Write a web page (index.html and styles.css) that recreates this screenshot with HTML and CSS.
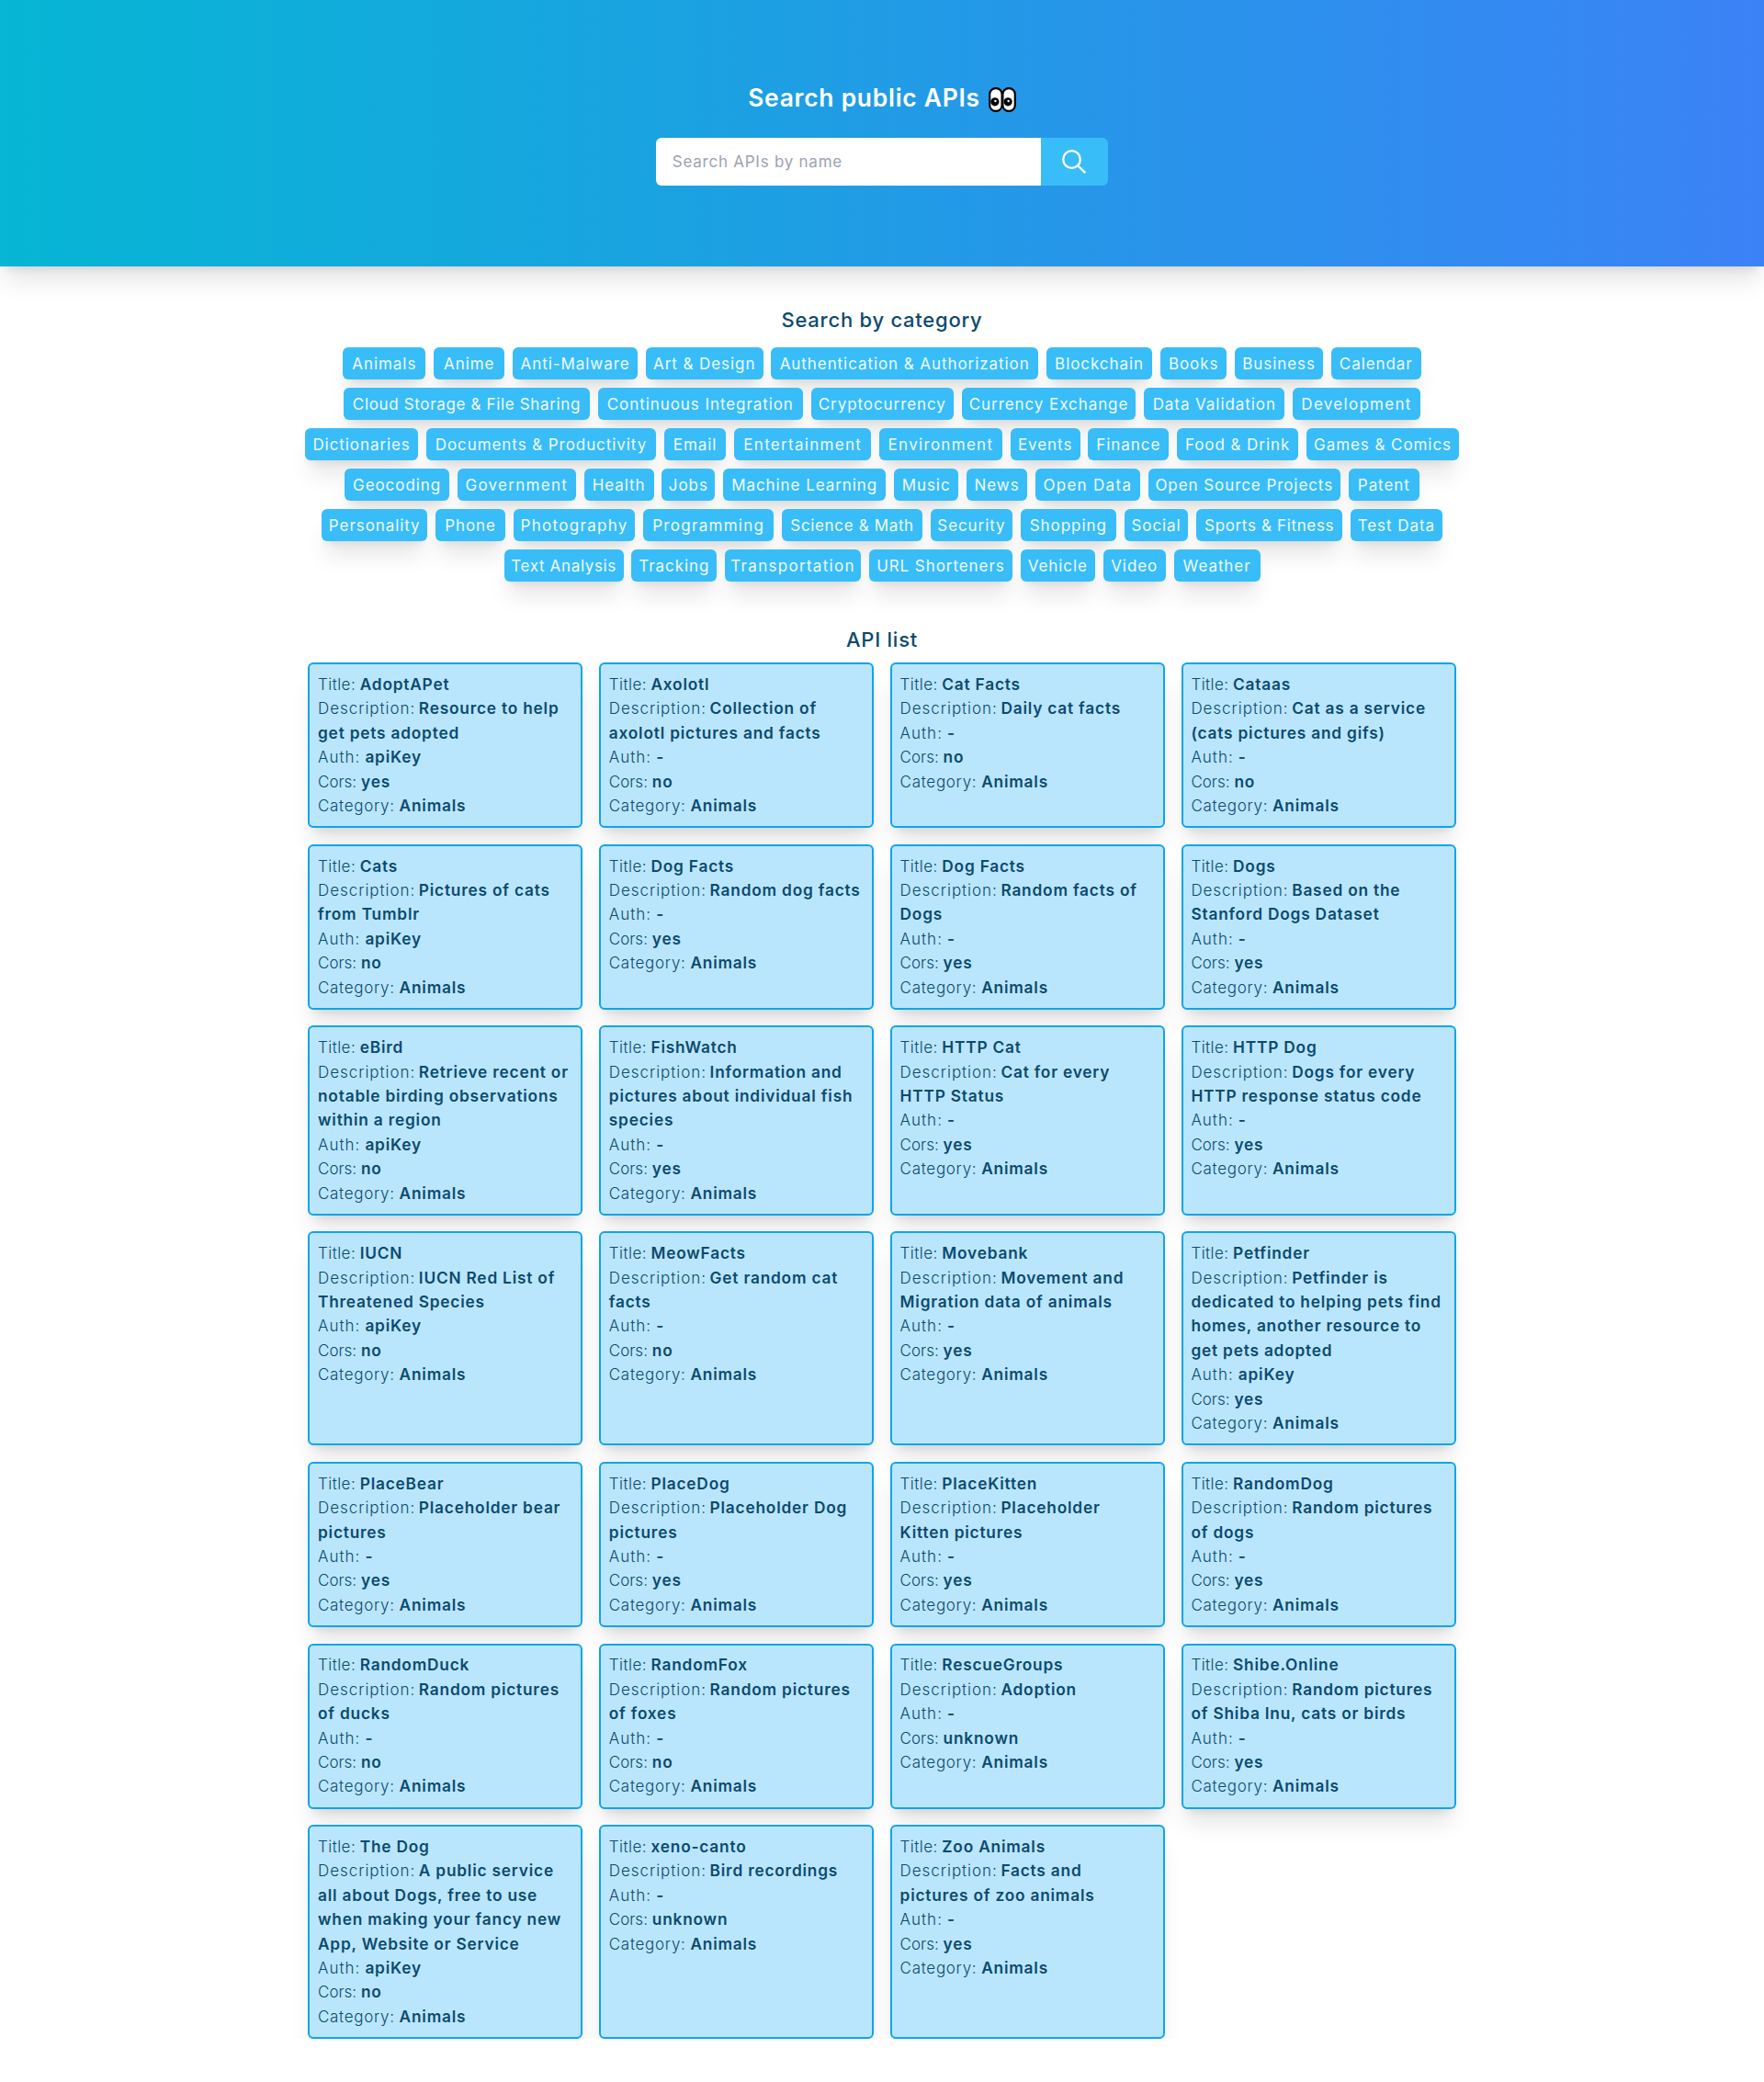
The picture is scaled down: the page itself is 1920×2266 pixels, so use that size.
FILE: index.html
```html
<!DOCTYPE html>
<html lang="en">
<head>
<meta charset="utf-8">
<title>Search public APIs</title>
<link rel="stylesheet" href="styles.css">
</head>
<body>
<header class="hero">
  <h1 class="hero-title"><span>Search public APIs</span>
    <svg class="eyes" viewBox="0 0 30 27" aria-hidden="true">
      <rect x="1.2" y="1.2" width="13.4" height="24.6" rx="6.4" fill="#fff" stroke="#000" stroke-width="2.2"/>
      <rect x="15.4" y="1.2" width="13.4" height="24.6" rx="6.4" fill="#fff" stroke="#000" stroke-width="2.2"/>
      <circle cx="6.9" cy="15.8" r="4.6"/><circle cx="21.1" cy="15.8" r="4.6"/>
      <circle cx="7.4" cy="15" r="1.2" fill="#fff"/><circle cx="21.6" cy="15" r="1.2" fill="#fff"/>
    </svg>
  </h1>
  <form class="search">
    <input class="search-input" type="text" placeholder="Search APIs by name">
    <button class="search-button" type="button" aria-label="Search">
      <svg viewBox="0 0 26 26"><circle cx="10.5" cy="10.5" r="9.3"/><path d="M17.2 17.2 25.2 25.2"/></svg>
    </button>
  </form>
</header>
<main>
<h2 class="section-title by-category">Search by category</h2>
<nav class="tags">
<a style="--w:90.2px">Animals</a><a style="--w:77.1px">Anime</a><a style="--w:135.9px">Anti-Malware</a><a style="--w:127.8px">Art &amp; Design</a><a style="--w:290.6px">Authentication &amp; Authorization</a><a style="--w:115.5px">Blockchain</a><a style="--w:72.2px">Books</a><a style="--w:95.9px">Business</a><a style="--w:98px">Calendar</a>
<a class="snug" style="--w:267.8px">Cloud Storage &amp; File Sharing</a><a style="--w:223.3px">Continuous Integration</a><a style="--w:155.1px">Cryptocurrency</a><a style="--w:189.8px">Currency Exchange</a><a style="--w:153.1px">Data Validation</a><a class="wide" style="--w:138.8px">Development</a>
<a style="--w:123.3px">Dictionaries</a><a style="--w:249.8px">Documents &amp; Productivity</a><a style="--w:67.8px">Email</a><a class="wide" style="--w:149px">Entertainment</a><a class="wide" style="--w:133.9px">Environment</a><a style="--w:75.9px">Events</a><a style="--w:87.8px">Finance</a><a style="--w:132.2px">Food &amp; Drink</a><a style="--w:166.1px">Games &amp; Comics</a>
<a style="--w:113.9px">Geocoding</a><a class="wide" style="--w:129px">Government</a><a style="--w:75.9px">Health</a><a style="--w:58px">Jobs</a><a style="--w:177.1px">Machine Learning</a><a style="--w:70.2px">Music</a><a style="--w:66.1px">News</a><a class="wide" style="--w:113.9px">Open Data</a><a style="--w:209.4px">Open Source Projects</a><a style="--w:77.1px">Patent</a>
<a style="--w:115.1px">Personality</a><a style="--w:75.9px">Phone</a><a class="wide" style="--w:132.7px">Photography</a><a class="wide" style="--w:142px">Programming</a><a class="snug" style="--w:153.1px">Science &amp; Math</a><a style="--w:89px">Security</a><a style="--w:104.1px">Shopping</a><a style="--w:69.8px">Social</a><a class="snug" style="--w:158.8px">Sports &amp; Fitness</a><a style="--w:100px">Test Data</a>
<a class="snug" style="--w:130.2px">Text Analysis</a><a style="--w:92.7px">Tracking</a><a class="wide" style="--w:148.2px">Transportation</a><a style="--w:155.9px">URL Shorteners</a><a style="--w:81.2px">Vehicle</a><a style="--w:68.2px">Video</a><a style="--w:93.9px">Weather</a>
</nav>
<h2 class="section-title api-list">API list</h2>
<section class="cards">
<article class="card"><p><span class="t">Title:</span><b>AdoptAPet</b></p><p><span class="d">Description:</span><b>Resource to help<br>get pets adopted</b></p><p><span class="a">Auth:</span><b>apiKey</b></p><p><span class="c">Cors:</span><b>yes</b></p><p><span class="g">Category:</span><b>Animals</b></p></article>
<article class="card"><p><span class="t">Title:</span><b>Axolotl</b></p><p><span class="d">Description:</span><b>Collection of<br>axolotl pictures and facts</b></p><p><span class="a">Auth:</span><b>-</b></p><p><span class="c">Cors:</span><b>no</b></p><p><span class="g">Category:</span><b>Animals</b></p></article>
<article class="card"><p><span class="t">Title:</span><b>Cat Facts</b></p><p><span class="d">Description:</span><b>Daily cat facts</b></p><p><span class="a">Auth:</span><b>-</b></p><p><span class="c">Cors:</span><b>no</b></p><p><span class="g">Category:</span><b>Animals</b></p></article>
<article class="card"><p><span class="t">Title:</span><b>Cataas</b></p><p><span class="d">Description:</span><b>Cat as a service<br>(cats pictures and gifs)</b></p><p><span class="a">Auth:</span><b>-</b></p><p><span class="c">Cors:</span><b>no</b></p><p><span class="g">Category:</span><b>Animals</b></p></article>

<article class="card"><p><span class="t">Title:</span><b>Cats</b></p><p><span class="d">Description:</span><b>Pictures of cats<br>from Tumblr</b></p><p><span class="a">Auth:</span><b>apiKey</b></p><p><span class="c">Cors:</span><b>no</b></p><p><span class="g">Category:</span><b>Animals</b></p></article>
<article class="card"><p><span class="t">Title:</span><b>Dog Facts</b></p><p><span class="d">Description:</span><b>Random dog facts</b></p><p><span class="a">Auth:</span><b>-</b></p><p><span class="c">Cors:</span><b>yes</b></p><p><span class="g">Category:</span><b>Animals</b></p></article>
<article class="card"><p><span class="t">Title:</span><b>Dog Facts</b></p><p><span class="d">Description:</span><b>Random facts of<br>Dogs</b></p><p><span class="a">Auth:</span><b>-</b></p><p><span class="c">Cors:</span><b>yes</b></p><p><span class="g">Category:</span><b>Animals</b></p></article>
<article class="card"><p><span class="t">Title:</span><b>Dogs</b></p><p><span class="d">Description:</span><b>Based on the<br>Stanford Dogs Dataset</b></p><p><span class="a">Auth:</span><b>-</b></p><p><span class="c">Cors:</span><b>yes</b></p><p><span class="g">Category:</span><b>Animals</b></p></article>

<article class="card"><p><span class="t">Title:</span><b>eBird</b></p><p><span class="d">Description:</span><b>Retrieve recent or<br>notable birding observations<br>within a region</b></p><p><span class="a">Auth:</span><b>apiKey</b></p><p><span class="c">Cors:</span><b>no</b></p><p><span class="g">Category:</span><b>Animals</b></p></article>
<article class="card"><p><span class="t">Title:</span><b>FishWatch</b></p><p><span class="d">Description:</span><b>Information and<br>pictures about individual fish<br>species</b></p><p><span class="a">Auth:</span><b>-</b></p><p><span class="c">Cors:</span><b>yes</b></p><p><span class="g">Category:</span><b>Animals</b></p></article>
<article class="card"><p><span class="t">Title:</span><b>HTTP Cat</b></p><p><span class="d">Description:</span><b>Cat for every<br>HTTP Status</b></p><p><span class="a">Auth:</span><b>-</b></p><p><span class="c">Cors:</span><b>yes</b></p><p><span class="g">Category:</span><b>Animals</b></p></article>
<article class="card"><p><span class="t">Title:</span><b>HTTP Dog</b></p><p><span class="d">Description:</span><b>Dogs for every<br>HTTP response status code</b></p><p><span class="a">Auth:</span><b>-</b></p><p><span class="c">Cors:</span><b>yes</b></p><p><span class="g">Category:</span><b>Animals</b></p></article>

<article class="card"><p><span class="t">Title:</span><b>IUCN</b></p><p><span class="d">Description:</span><b>IUCN Red List of<br>Threatened Species</b></p><p><span class="a">Auth:</span><b>apiKey</b></p><p><span class="c">Cors:</span><b>no</b></p><p><span class="g">Category:</span><b>Animals</b></p></article>
<article class="card"><p><span class="t">Title:</span><b>MeowFacts</b></p><p><span class="d">Description:</span><b>Get random cat<br>facts</b></p><p><span class="a">Auth:</span><b>-</b></p><p><span class="c">Cors:</span><b>no</b></p><p><span class="g">Category:</span><b>Animals</b></p></article>
<article class="card"><p><span class="t">Title:</span><b>Movebank</b></p><p><span class="d">Description:</span><b>Movement and<br>Migration data of animals</b></p><p><span class="a">Auth:</span><b>-</b></p><p><span class="c">Cors:</span><b>yes</b></p><p><span class="g">Category:</span><b>Animals</b></p></article>
<article class="card"><p><span class="t">Title:</span><b>Petfinder</b></p><p><span class="d">Description:</span><b>Petfinder is<br>dedicated to helping pets find<br>homes, another resource to<br>get pets adopted</b></p><p><span class="a">Auth:</span><b>apiKey</b></p><p><span class="c">Cors:</span><b>yes</b></p><p><span class="g">Category:</span><b>Animals</b></p></article>

<article class="card"><p><span class="t">Title:</span><b>PlaceBear</b></p><p><span class="d">Description:</span><b>Placeholder bear<br>pictures</b></p><p><span class="a">Auth:</span><b>-</b></p><p><span class="c">Cors:</span><b>yes</b></p><p><span class="g">Category:</span><b>Animals</b></p></article>
<article class="card"><p><span class="t">Title:</span><b>PlaceDog</b></p><p><span class="d">Description:</span><b>Placeholder Dog<br>pictures</b></p><p><span class="a">Auth:</span><b>-</b></p><p><span class="c">Cors:</span><b>yes</b></p><p><span class="g">Category:</span><b>Animals</b></p></article>
<article class="card"><p><span class="t">Title:</span><b>PlaceKitten</b></p><p><span class="d">Description:</span><b>Placeholder<br>Kitten pictures</b></p><p><span class="a">Auth:</span><b>-</b></p><p><span class="c">Cors:</span><b>yes</b></p><p><span class="g">Category:</span><b>Animals</b></p></article>
<article class="card"><p><span class="t">Title:</span><b>RandomDog</b></p><p><span class="d">Description:</span><b>Random pictures<br>of dogs</b></p><p><span class="a">Auth:</span><b>-</b></p><p><span class="c">Cors:</span><b>yes</b></p><p><span class="g">Category:</span><b>Animals</b></p></article>

<article class="card"><p><span class="t">Title:</span><b>RandomDuck</b></p><p><span class="d">Description:</span><b>Random pictures<br>of ducks</b></p><p><span class="a">Auth:</span><b>-</b></p><p><span class="c">Cors:</span><b>no</b></p><p><span class="g">Category:</span><b>Animals</b></p></article>
<article class="card"><p><span class="t">Title:</span><b>RandomFox</b></p><p><span class="d">Description:</span><b>Random pictures<br>of foxes</b></p><p><span class="a">Auth:</span><b>-</b></p><p><span class="c">Cors:</span><b>no</b></p><p><span class="g">Category:</span><b>Animals</b></p></article>
<article class="card"><p><span class="t">Title:</span><b>RescueGroups</b></p><p><span class="d">Description:</span><b>Adoption</b></p><p><span class="a">Auth:</span><b>-</b></p><p><span class="c">Cors:</span><b>unknown</b></p><p><span class="g">Category:</span><b>Animals</b></p></article>
<article class="card"><p><span class="t">Title:</span><b>Shibe.Online</b></p><p><span class="d">Description:</span><b>Random pictures<br>of Shiba Inu, cats or birds</b></p><p><span class="a">Auth:</span><b>-</b></p><p><span class="c">Cors:</span><b>yes</b></p><p><span class="g">Category:</span><b>Animals</b></p></article>

<article class="card"><p><span class="t">Title:</span><b>The Dog</b></p><p><span class="d">Description:</span><b>A public service<br>all about Dogs, free to use<br>when making your fancy new<br>App, Website or Service</b></p><p><span class="a">Auth:</span><b>apiKey</b></p><p><span class="c">Cors:</span><b>no</b></p><p><span class="g">Category:</span><b>Animals</b></p></article>
<article class="card"><p><span class="t">Title:</span><b>xeno-canto</b></p><p><span class="d">Description:</span><b>Bird recordings</b></p><p><span class="a">Auth:</span><b>-</b></p><p><span class="c">Cors:</span><b>unknown</b></p><p><span class="g">Category:</span><b>Animals</b></p></article>
<article class="card"><p><span class="t">Title:</span><b>Zoo Animals</b></p><p><span class="d">Description:</span><b>Facts and<br>pictures of zoo animals</b></p><p><span class="a">Auth:</span><b>-</b></p><p><span class="c">Cors:</span><b>yes</b></p><p><span class="g">Category:</span><b>Animals</b></p></article>
</section>
</main>
</body>
</html>
```
FILE: styles.css
```css
* { box-sizing: border-box; margin: 0; padding: 0; }
html { font-size: 17.6px; }
body { font-family: Inter, "Liberation Sans", sans-serif; font-size: 17px; line-height: 26.4px; color: #0c4a6e; background: #fff; }

.hero { height: 289.6px; padding-top: 89px; display: flex; flex-direction: column; align-items: center; gap: 25.8px; background: linear-gradient(to right, #06b6d4, #3b82f6); box-shadow: 0 20px 25px -5px rgba(0,0,0,.1), 0 8px 10px -6px rgba(0,0,0,.1); }
.hero-title { display: flex; align-items: center; gap: 9px; height: 35.2px; color: #fff; font-size: 26.4px; font-weight: 600; letter-spacing: .75px; white-space: nowrap; }
.eyes { width: 30px; height: 27px; margin-top: 3px; }
.search { display: flex; width: 491.6px; height: 52px; border-radius: 6px; overflow: hidden; }
.search-input { flex: 1; min-width: 0; border: 0; padding: 1px 17.6px 0; font: inherit; letter-spacing: .75px; background: #fff; }
.search-input::placeholder { color: #9ca3af; opacity: 1; }
.search-button { width: 73px; border: 0; display: flex; align-items: center; justify-content: center; background: #38bdf8; }
.search-button svg { width: 26px; height: 26px; fill: none; stroke: #fff; stroke-width: 2.3; }

.section-title { text-align: center; font-size: 22px; line-height: 30.8px; font-weight: 500; letter-spacing: .75px; }
.by-category { margin-top: 43px; }
.tags { width: 1267px; margin: 14.6px auto 0; display: flex; flex-wrap: wrap; justify-content: center; gap: 8.8px; }
.tags a { width: var(--w); height: 35.2px; line-height: 36.4px; text-align: center; white-space: nowrap; border-radius: 6px; color: #f0f9ff; background: #38bdf8; letter-spacing: .93px; box-shadow: 0 20px 25px -5px rgba(0,0,0,.1), 0 8px 10px -6px rgba(0,0,0,.1); }
.tags .wide { letter-spacing: 1.3px; }
.tags .snug { letter-spacing: .65px; }
.api-list { margin-top: 47.5px; }
.cards { width: 1249.6px; margin: 9.8px auto 0; display: grid; grid-template-columns: repeat(4, 1fr); gap: 17.6px; }
.card { padding: 8.8px; border: 2px solid #0ea5e9; border-radius: 6px; background: #bae6fd; box-shadow: 0 20px 25px -5px rgba(0,0,0,.1), 0 8px 10px -6px rgba(0,0,0,.1); white-space: nowrap; }
.card span { display: inline-block; font-weight: 300; }
.card b { font-size: 17.3px; font-weight: 600; letter-spacing: .8px; }
.t { width: 45.7px; letter-spacing: .45px; }
.d { width: 109.8px; letter-spacing: .95px; }
.a { width: 51.4px; letter-spacing: 1px; }
.c { width: 47px; letter-spacing: 0; }
.g { width: 88.6px; letter-spacing: .7px; }
```
